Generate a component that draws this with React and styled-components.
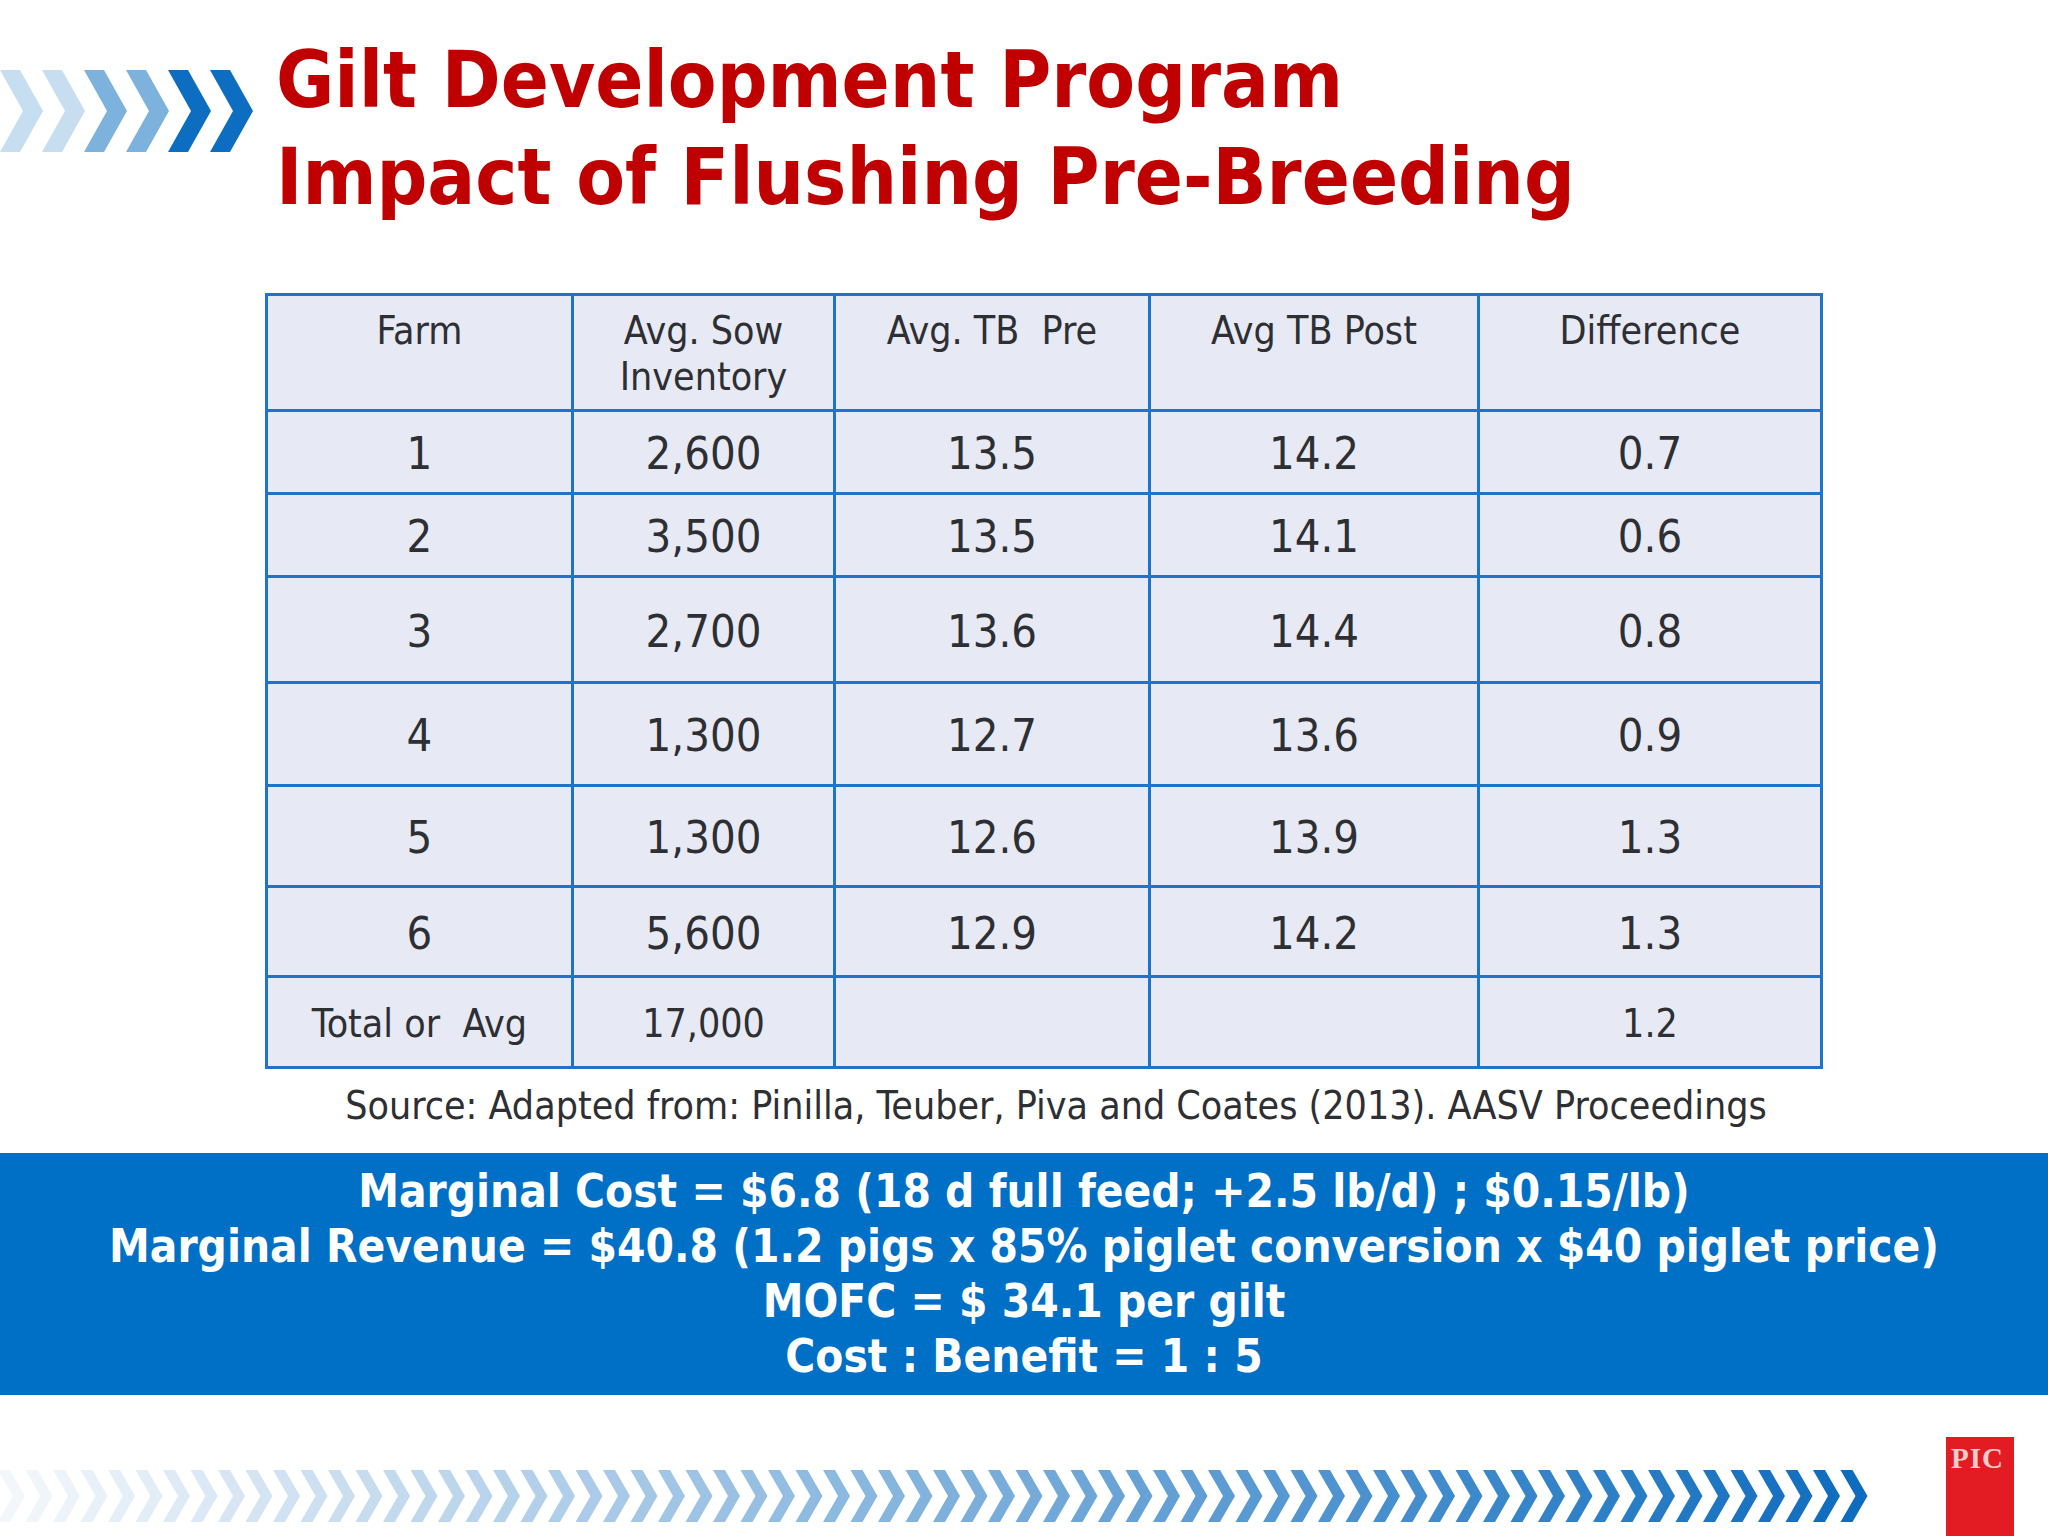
import React from "react";
import styled, { createGlobalStyle } from "styled-components";

const Global = createGlobalStyle`
  html, body { margin: 0; padding: 0; background: #fff; }
  body { font-family: "DejaVu Sans Condensed", "DejaVu Sans", "Liberation Sans", sans-serif; }
`;

const Slide = styled.div`
  width: 2048px;
  height: 1536px;
  overflow: hidden;
  background: #fff;
  display: flex;
  flex-direction: column;
`;

const Header = styled.header`
  display: flex;
  align-items: flex-start;
  height: 293px;
  padding-top: 32px;
  box-sizing: border-box;
`;

const TopArrows = styled.svg`
  flex: none;
  margin-top: 38px;
  display: block;
`;

const Title = styled.h1`
  margin: 0 0 0 22px;
  font-size: 79px;
  line-height: 97px;
  font-weight: bold;
  color: #c00000;
  white-space: nowrap;
`;

const Table = styled.div`
  display: grid;
  grid-template-columns: 306px 262px 315px 329px 343px;
  grid-template-rows: 116px 83px 83px 106px 103px 101px 90px 91px;
  width: fit-content;
  margin-left: 265px;
  border-left: 3px solid #1f74c9;
  border-top: 3px solid #1f74c9;
`;

const Cell = styled.div`
  box-sizing: border-box;
  background: #e7eaf5;
  border-right: 3px solid #1f74c9;
  border-bottom: 3px solid #1f74c9;
  color: #2e2f33;
  display: flex;
  justify-content: center;
  text-align: center;
  align-items: ${(p) => (p.$head ? "flex-start" : "center")};
  padding-top: ${(p) => (p.$head ? "12px" : "4px")};
  font-size: ${(p) => (p.$head ? "39px" : p.$small ? "39px" : "45px")};
  line-height: ${(p) => (p.$head ? "46px" : "1.2")};
  white-space: pre;
`;

const Source = styled.p`
  margin: 15px 0 0 266px;
  width: 1580px;
  text-align: center;
  font-size: 39px;
  line-height: 44px;
  color: #2e2f33;
  white-space: nowrap;
`;

const Summary = styled.section`
  margin-top: 25px;
  height: 242px;
  box-sizing: border-box;
  padding-top: 11px;
  background: #0070c6;
  color: #fff;
  font-weight: bold;
  font-size: 45.5px;
  line-height: 55px;
  text-align: center;
  white-space: nowrap;
`;

const Footer = styled.footer`
  margin-top: 42px;
  height: 99px;
  display: flex;
  align-items: flex-start;
`;

const BottomArrows = styled.svg`
  flex: none;
  margin-top: 33px;
  display: block;
`;

const Logo = styled.div`
  flex: none;
  margin-left: 66px;
  width: 68px;
  height: 99px;
  background: #e31b23;
  box-sizing: border-box;
  padding: 6px 0 0 5px;
  font-family: "Liberation Serif", "DejaVu Serif", serif;
  font-weight: bold;
  font-size: 29px;
  line-height: 30px;
  letter-spacing: 1px;
  color: #f4cccc;
`;

const header = ["Farm", "Avg. Sow\nInventory", "Avg. TB  Pre", "Avg TB Post", "Difference"];
const rows = [
  ["1", "2,600", "13.5", "14.2", "0.7"],
  ["2", "3,500", "13.5", "14.1", "0.6"],
  ["3", "2,700", "13.6", "14.4", "0.8"],
  ["4", "1,300", "12.7", "13.6", "0.9"],
  ["5", "1,300", "12.6", "13.9", "1.3"],
  ["6", "5,600", "12.9", "14.2", "1.3"],
];
const total = ["Total or  Avg", "17,000", "", "", "1.2"];

const topColors = ["#c7ddf0", "#c7ddf0", "#7db2dd", "#7db2dd", "#0d6ec1", "#0d6ec1"];

function mix(t) {
  const a = [243, 247, 251];
  const b = [14, 108, 190];
  const c = a.map((v, i) => Math.round(v + (b[i] - v) * t));
  return `rgb(${c[0]},${c[1]},${c[2]})`;
}

const bottomCount = 68;

export default function App() {
  return (
    <>
      <Global />
      <Slide>
        <Header>
          <TopArrows width="254" height="84" viewBox="0 0 254 84">
            {topColors.map((c, i) => {
              const x = i * 42;
              return (
                <polygon
                  key={i}
                  fill={c}
                  points={`${x},0 ${x + 20},0 ${x + 43},41 ${x + 20},82 ${x},82 ${x + 23},41`}
                />
              );
            })}
          </TopArrows>
          <Title>
            Gilt Development Program
            <br />
            Impact of Flushing Pre-Breeding
          </Title>
        </Header>

        <Table>
          {header.map((h, i) => (
            <Cell key={"h" + i} $head>
              {h}
            </Cell>
          ))}
          {rows.map((r, ri) =>
            r.map((v, ci) => <Cell key={ri + "-" + ci}>{v}</Cell>)
          )}
          {total.map((v, i) => (
            <Cell key={"t" + i} $small>
              {v}
            </Cell>
          ))}
        </Table>

        <Source>
          Source: Adapted from: Pinilla, Teuber, Piva and Coates (2013). AASV Proceedings
        </Source>

        <Summary>
          <div>Marginal Cost = $6.8 (18 d full feed; +2.5 lb/d) ; $0.15/lb)</div>
          <div>Marginal Revenue = $40.8 (1.2 pigs x 85% piglet conversion x $40 piglet price)</div>
          <div>MOFC = $ 34.1 per gilt</div>
          <div>Cost : Benefit = 1 : 5</div>
        </Summary>

        <Footer>
          <BottomArrows width="1880" height="52" viewBox="0 0 1880 52">
            {Array.from({ length: bottomCount }).map((_, i) => {
              const x = -2 + i * 27.5;
              return (
                <polygon
                  key={i}
                  fill={mix(i / (bottomCount - 1))}
                  points={`${x},0 ${x + 12},0 ${x + 27},26 ${x + 12},52 ${x},52 ${x + 15},26`}
                />
              );
            })}
          </BottomArrows>
          <Logo>PIC</Logo>
        </Footer>
      </Slide>
    </>
  );
}
